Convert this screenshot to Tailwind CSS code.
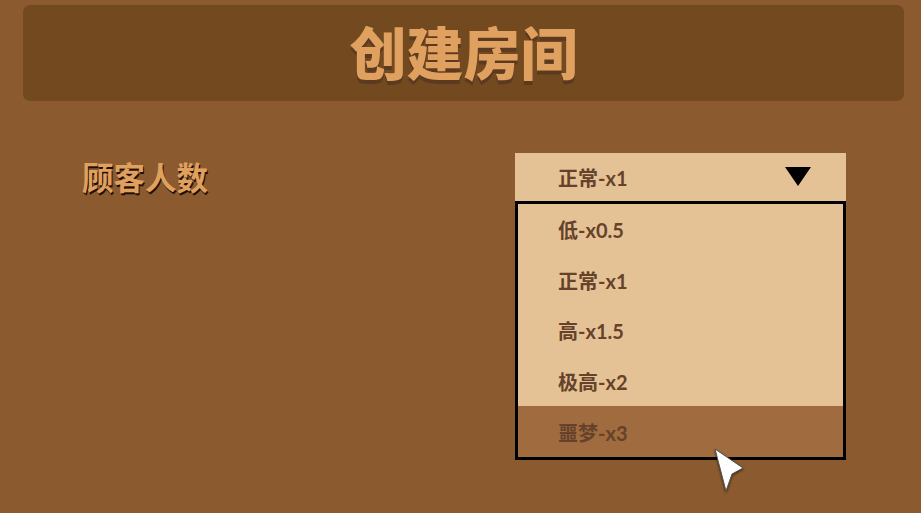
<!DOCTYPE html>
<html lang="zh">
<head>
  <meta charset="UTF-8" />
  <title>创建房间</title>
  <script src="https://cdn.jsdelivr.net/npm/@tailwindcss/browser@4"></script>
</head>
<body class="bg-[#8b5a2e] overflow-hidden font-['Lato','Noto_Sans_CJK_SC',sans-serif]">
  <div class="relative w-[921px] h-[513px] pt-[5px] pl-[23px] pr-[17px]">
    <!-- header -->
    <div class="h-[96px] rounded-[7px] bg-[#734a20] flex items-center justify-center">
      <h1 class="text-[57px] leading-none font-black text-[#e0a060] [text-shadow:0_4px_0_#5c3a1f]">创建房间</h1>
    </div>

    <div class="flex justify-between mt-[52px] pl-[59px] pr-[58px]">
      <div class="text-[31.5px] leading-[50px] font-bold text-[#e0a060] [text-shadow:1px_2px_0_#1c1006]">顾客人数</div>

      <!-- dropdown -->
      <div class="w-[331px]">
        <div class="h-[48px] bg-[#e4c296] flex items-center justify-between pl-[43px] pr-[35px] text-[20px] font-bold text-[#66422a]">
          <span class="translate-y-[1px]">正常-x1</span>
          <svg class="-translate-y-[1px]" width="26" height="19" viewBox="0 0 26 19"><path d="M0 0H26L13 19Z" fill="#000" /></svg>
        </div>
        <ul class="border-[3px] border-black bg-[#e4c296] text-[20px] font-bold text-[#66422a]">
          <li class="h-[50.5px] flex items-center pl-[40px] pt-[2px]">低-x0.5</li>
          <li class="h-[50.5px] flex items-center pl-[40px] pt-[2px]">正常-x1</li>
          <li class="h-[50.5px] flex items-center pl-[40px] pt-[2px]">高-x1.5</li>
          <li class="h-[50.5px] flex items-center pl-[40px] pt-[2px]">极高-x2</li>
          <li class="h-[51px] flex items-center pl-[40px] pt-[2px] bg-[#a06b3f]">噩梦-x3</li>
        </ul>
      </div>
    </div>

    <!-- mouse cursor -->
    <svg class="absolute left-[712px] top-[447px] drop-shadow-[0_1px_1px_rgba(0,0,0,0.6)]" width="34" height="46" viewBox="0 0 34 46">
      <path d="M3 2L31 21L20 27L14 44Z" fill="#fff" stroke="#555" stroke-width="1" stroke-linejoin="round" />
    </svg>
  </div>
</body>
</html>
